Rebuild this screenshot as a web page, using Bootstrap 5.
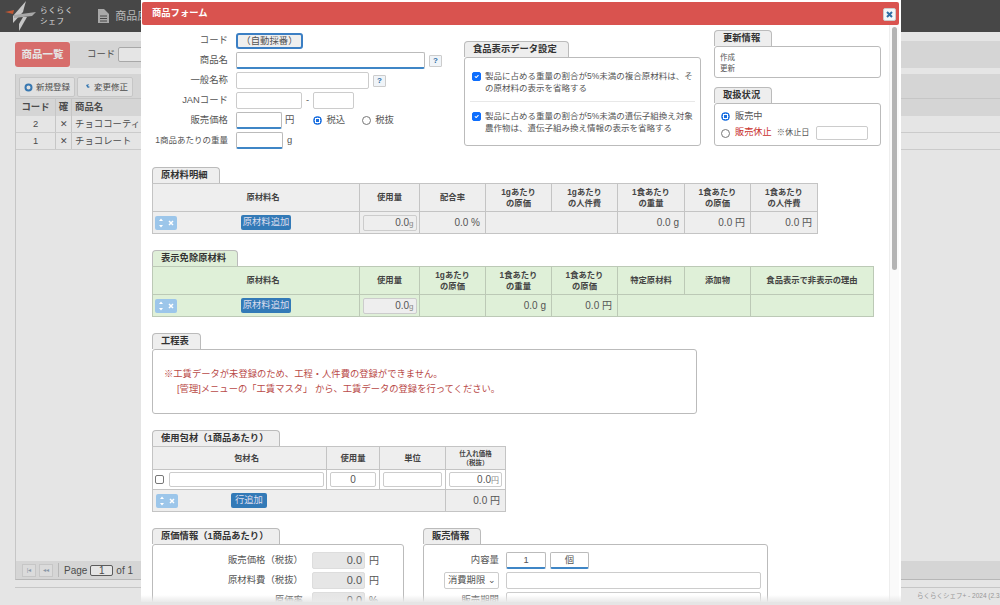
<!DOCTYPE html>
<html lang="ja">
<head>
<meta charset="utf-8">
<title>商品フォーム</title>
<link href="https://cdn.jsdelivr.net/npm/bootstrap@5.3.0/dist/css/bootstrap.min.css" rel="stylesheet">
<style>
html,body{height:100%;overflow:hidden}
body{font-family:"Liberation Sans","Noto Sans CJK JP",sans-serif;font-size:9.4px;color:#555;background:#fff;position:relative;width:1000px;height:605px}
/* background page */
.topbar{height:32px;background:#505050;color:#ccc}
.logo-mark{margin-left:4px}
.logo-txt{font-size:7.500px;line-height:11px;color:#f0f0f0;letter-spacing:.8px;margin-left:4px}
.menu-ico{margin-left:25px}
.menu-txt{font-size:11px;color:#ccc;margin-left:6px;width:26px;overflow:hidden;white-space:nowrap}
.bg-gap{height:9px}
.bg-head{height:27px;padding:0 0 0 15px;background:linear-gradient(90deg,#fff 70px,#eee 70px)}
.red-tab{width:55px;height:25px;background:#f07a78;color:#fff;font-weight:700;font-size:10.500px;border-radius:3px}
.bg-lab{margin-left:17px}
.bg-input{width:60px;height:15px;background:#fff;border:1px solid #bbb;border-radius:2px;margin-left:3px}
.panel{margin:6px 0 0 15px;height:506px;background:#fff;border-left:1px solid #ddd;border-bottom:1px solid #ccc;width:985px;position:relative}
.tool{height:25px;background:#eee;padding:3px 3px 2px;gap:2px;border-bottom:1px solid #ddd}
.tool-b{height:20px;width:56px;background:#fafafa;border:1px solid #ddd;border-radius:2px;font-size:8.500px;color:#555;gap:3px}
.bg-row{height:17px;border-bottom:1px solid #e2e2e2;line-height:16px}
.bg-row.hd{background:#eee;font-weight:700;border-bottom:0}
.c1{width:40px;text-align:center;border-right:1px solid #ddd}
.c2{width:16px;text-align:center;border-right:1px solid #ddd}
.c3{padding-left:3px;white-space:nowrap}
.pager{position:absolute;left:0;right:0;bottom:0;height:18px;background:#eee;padding-left:6px;gap:3px;font-size:10px}
.pg-b{width:14px;height:13px;background:#f4f4f4;border:1px solid #ddd;font-size:6px;color:#9ab;text-align:center;line-height:11px}
.pg-i{width:23px;height:11px;border:1px solid #666;border-radius:2px;background:#fff;text-align:center;line-height:9px}
.pg-sep{width:1px;height:14px;background:#ccc;margin:0 2px}
.bg-line{margin:7px 0 0 15px;border-top:1px solid #ddd}
.foot-t{position:absolute;left:917px;top:591px;font-size:6.500px;color:#aaa;white-space:nowrap;width:83px;overflow:hidden}
.dim{position:absolute;inset:0;background:rgba(0,0,0,.1)}
/* modal window */
.win{position:absolute;left:141px;top:0;width:760px;height:602px;background:#fff;overflow:hidden}
.win::after{content:"";position:absolute;left:0;right:0;bottom:0;height:7px;background:linear-gradient(rgba(235,235,235,0),#e9e9e9)}
.win-h{height:23px;margin:2px 2px 0 1px;background:#d9534f;color:#fff;font-weight:700;font-size:9.300px;padding:1px 3px 0 10px;border-radius:2px}
.win-x{width:13px;height:13px;background:#f4f6f8;border:1px solid #ccc;border-radius:2px}
.sb{position:absolute;right:2px;top:25px;width:10px;bottom:0;background:#fafafa;border-left:1px solid #eee}
.sb-t{position:absolute;left:2px;top:2px;width:5px;height:243px;background:#b4b4b4;border-radius:3px}
.win-b{padding-left:11px;width:740px}
.top-part{height:142px}
.form-col{width:312px;padding-top:7px}
.frow{height:17px;margin-bottom:3px}
.flab{width:76px;margin-right:8px;text-align:right;white-space:nowrap}
.lab-s{font-size:8.500px}
.ipt{height:17px;border:1px solid #ccc;border-radius:2px;background:#fff;display:block}
.ipt.req{border-color:#bbb;border-bottom:2px solid #3f86c6}
.w189{width:189px}.w133{width:133px}.w66{width:66px}.w41{width:41px}.w46{width:46px}.w47{width:47px}.w52{width:52px;height:14px;margin-left:1px}
.auto-b{width:67px;height:16px;background:#efefef;border:2px solid #3b7fc4;border-radius:3px;font-size:9.400px;line-height:12px;text-align:center}
.q{width:13px;height:12px;background:#f0f4f8;border:1px solid #ccc;border-radius:1px;color:#2e6da4;font-weight:700;font-size:8px;line-height:10px;text-align:center;margin-left:4px}
.tabt{display:block;width:fit-content;height:16px;line-height:15px;background:#eee;border:1px solid #bbb;border-bottom:0;border-radius:4px 4px 0 0;padding:0 11px 0 8px;font-weight:700;font-size:9.300px;color:#333;white-space:nowrap}
.tabt.grn{background:#dfefd8}
.sbox{border:1px solid #bbb;border-radius:3px;background:#fff}
.food{width:237px;padding-top:16px}
.food .sbox{height:89px;padding:0 5px}
.chk-r{padding:12px 0 7px 2px;line-height:12px;font-size:8.500px;gap:4px}
.chk-r+.chk-r{border-top:1px solid #e8e8e8;padding-top:8px;padding-bottom:0}
.form-check-input{border-color:#777}
.form-check-input.mini{width:9px;height:9px;margin:2px 0 0;flex:none;border-radius:2px}
.form-check-input.rd{width:9px;height:9px;margin:0;flex:none}
.form-check-input.rd:checked{background:radial-gradient(circle,#1a6fe0 0 34%,#fff 38% 58%,#1a6fe0 62%);border-color:#1a6fe0}
.form-check-input.pk{width:9px;height:9px;margin:0;flex:none;border-radius:2px}
.m19{margin-left:3px;margin-right:19px}.m17{margin-left:4px;margin-right:17px}
.rt{width:167px;margin-left:13px;padding-top:5px}
.upd{height:32px;padding:5px 5px;font-size:7.500px;line-height:11px}
.stat{height:43px;padding:6px 6px;font-size:9.200px;white-space:nowrap}
.sr1{height:13px;margin-bottom:3px;gap:5px}
.sr2{height:14px;gap:5px}
.sm8{font-size:8.200px}
.sp9{height:9px}
.red-t{color:#c9302c}
.tw{table-layout:fixed;border-collapse:collapse;margin:0}
.tw th,.tw td{border:1px solid #c4c4c4;padding:0;background:#eee;vertical-align:middle;font-size:10px;box-shadow:none;color:#555}
.tw th{text-align:center;font-weight:700;line-height:11px;font-size:8.300px;color:#444}
.tw th.th-s{font-size:6.500px;line-height:9px}
.tw th.th-n{padding-left:14px}
.tw.grn th,.tw.grn td{background:#dff0d8;border-color:#bcc9b6}
.tw td.r{text-align:right;padding-right:5px}
.tw td.wh{background:#fff}
.tw .hr1{height:28px}.tw .br1{height:22px}
.t665{width:665px}.t721{width:721px}.t353{width:353px}
.k207{width:207px}.k60{width:60px}.k66{width:66px}.k67{width:67px}.k123{width:123px}.k174{width:174px}.k53{width:53px}
.ctrl{width:22px;height:14px;background:#9cc6ea;border-radius:2px;margin-left:2px;flex:none}
.ctrl-p{margin-left:3px}
.add-b{background:#337ab7;color:#dde;border:0;border-radius:2px;font-size:9.300px;height:15px;line-height:15px;padding:0 2px;font-weight:400}
.add-m{margin:0 auto;position:relative;left:-2px}
.add-line{margin-left:53px;padding:0 4px}
.use-b{height:16px;width:54px;margin:0 auto;background:#eee;border:1px solid #ccc;border-radius:2px;padding:0 2px;text-align:right;font-size:10px;line-height:14px;color:#555}
.use-b small{font-size:8px;color:#888}
.kou{width:545px;height:65px;padding:17px 0 0 11px;line-height:15px;color:#b94a48;font-size:9.300px}
.kou p{margin:0}.kou p+p{padding-left:13px}
.kh1{height:23px}.kh2{height:20px}.kh3{height:22px}
.cin{height:15px;background:#fff;border:1px solid #ccc;border-radius:2px;margin:0 auto;width:calc(100% - 6px);text-align:center;line-height:13px}
.cin.rr{text-align:right;padding-right:2px}
.cin small{font-size:8px;color:#888}
.cin.ff{flex:1 1 auto;width:auto;margin:0}
.pk-w{padding:0 2px;gap:5px}
.gen{width:252px;height:80px;padding:7px 0 0}
.han{width:345px;height:80px;padding:7px 0 0}
.gap16{height:16px}
.wrap-h{margin-left:19px}
.grow{height:17px;margin-bottom:3px}
.glab{width:150px;text-align:right;margin-right:9px}
.ro{width:53px;height:17px;background:#e6e6e6;border:1px solid #ddd;border-radius:2px;text-align:right;padding-right:2px;font-size:11px;line-height:15px}
.un{margin-left:4px;font-size:10px}
.hlab{width:75px;text-align:right;margin-right:7px}
.sel{width:55px;height:17px;margin-left:20px;margin-right:7px;border:1px solid #ccc;border-radius:2px;padding:0 3px;background:#fff;white-space:nowrap;font-size:9.300px;line-height:15px}
.i255{width:255px}.i40{width:40px;text-align:center;line-height:14px}.i39{width:39px;margin-left:4px;text-align:center;line-height:14px}
</style>
</head>
<body>
<div class="topbar d-flex align-items-center">
  <svg class="logo-mark" width="32" height="32" viewBox="0 0 32 32"><path d="M22 1 9 16v7L19 12l1-4z" fill="#ddd"/><path d="M10 15 32 12l-4 4-18 2z" fill="#bbb"/><path d="M23 17 15 31v-7l4-7z" fill="#ddd"/><path d="M1 12l9-2-1 4z" fill="#d8623a"/></svg>
  <div class="logo-txt">らくらく<br>シェフ</div>
  <svg class="menu-ico" width="11" height="14" viewBox="0 0 11 14"><path d="M0 0h6l5 5v9H0z" fill="#bbb"/><path d="M2 7h7M2 9.500h7M2 12h7" stroke="#505050"/></svg>
  <div class="menu-txt">商品原材料</div>
</div>
<div class="bg-gap"></div>
<div class="bg-head d-flex align-items-center">
  <div class="red-tab d-flex align-items-center justify-content-center">商品一覧</div>
  <div class="bg-lab">コード</div><div class="bg-input"></div>
</div>
<div class="panel">
  <div class="tool d-flex">
    <div class="tool-b d-flex align-items-center justify-content-center"><svg width="9" height="9" viewBox="0 0 9 9"><circle cx="4.500" cy="4.500" r="3" fill="none" stroke="#3f86c6" stroke-width="2"/></svg>新規登録</div>
    <div class="tool-b d-flex align-items-center justify-content-center"><svg width="9" height="9" viewBox="0 0 9 9"><path d="M1 8 5 4l-1-2 3-1-1 2 2 1-2 1-1-1-4 4z" fill="#3f86c6"/></svg>変更修正</div>
  </div>
  <div class="bg-row hd d-flex"><div class="c1">コード</div><div class="c2">確</div><div class="c3">商品名</div></div>
  <div class="bg-row d-flex"><div class="c1">2</div><div class="c2">✕</div><div class="c3">チョココーティング</div></div>
  <div class="bg-row d-flex"><div class="c1">1</div><div class="c2">✕</div><div class="c3">チョコレート</div></div>
  <div class="pager d-flex align-items-center">
    <div class="pg-b">|◂</div><div class="pg-b">◂◂</div><div class="pg-sep"></div><div>Page</div><div class="pg-i">1</div><div>of 1</div>
  </div>
</div>
<div class="bg-line"></div>
<div class="foot-t">らくらくシェフ+ - 2024 (2.3.8)</div>
<div class="dim"></div>

<div class="win">
  <div class="win-h d-flex align-items-center justify-content-between">
    <span>商品フォーム</span>
    <span class="win-x d-flex align-items-center justify-content-center"><svg width="7" height="7" viewBox="0 0 7 7"><path d="M1 1l5 5M6 1 1 6" stroke="#2e6da4" stroke-width="2"/></svg></span>
  </div>
  <div class="sb"><div class="sb-t"></div></div>
  <div class="win-b">
    <div class="top-part d-flex">
      <div class="form-col">
        <div class="frow d-flex align-items-center"><div class="flab">コード</div><div class="auto-b">（自動採番）</div></div>
        <div class="frow d-flex align-items-center"><div class="flab">商品名</div><div class="ipt req w189"></div><div class="q">?</div></div>
        <div class="frow d-flex align-items-center"><div class="flab">一般名称</div><div class="ipt w133"></div><div class="q">?</div></div>
        <div class="frow d-flex align-items-center"><div class="flab">JANコード</div><div class="ipt w66"></div><div class="mx-1">-</div><div class="ipt w41"></div></div>
        <div class="frow d-flex align-items-center"><div class="flab">販売価格</div><div class="ipt req w46"></div><div class="m19">円</div><input class="form-check-input rd" type="radio" name="tax" checked aria-label="税込"><div class="m17">税込</div><input class="form-check-input rd" type="radio" name="tax" aria-label="税抜"><div class="ms-1">税抜</div></div>
        <div class="frow d-flex align-items-center"><div class="flab lab-s">1商品あたりの重量</div><div class="ipt req w47"></div><div class="ms-1">g</div></div>
      </div>
      <div class="food">
        <span class="tabt">食品表示データ設定</span>
        <div class="sbox">
          <div class="chk-r d-flex"><input class="form-check-input mini" type="checkbox" checked aria-label="複合原材料"><div>製品に占める重量の割合が5%未満の複合原材料は、その原材料の表示を省略する</div></div>
          <div class="chk-r d-flex"><input class="form-check-input mini" type="checkbox" checked aria-label="遺伝子組換え"><div>製品に占める重量の割合が5%未満の遺伝子組換え対象農作物は、遺伝子組み換え情報の表示を省略する</div></div>
        </div>
      </div>
      <div class="rt">
        <span class="tabt">更新情報</span>
        <div class="sbox upd">作成<br>更新</div>
        <div class="sp9"></div>
        <span class="tabt">取扱状況</span>
        <div class="sbox stat">
          <div class="d-flex align-items-center sr1"><input class="form-check-input rd" type="radio" name="st" checked aria-label="販売中"><span>販売中</span></div>
          <div class="d-flex align-items-center sr2"><input class="form-check-input rd" type="radio" name="st" aria-label="販売休止"><span class="red-t">販売休止</span><span class="sm8">※休止日</span><div class="ipt w52"></div></div>
        </div>
      </div>
    </div>

    <span class="tabt">原材料明細</span>
    <table class="tw t665">
      <colgroup><col class="k207"><col class="k60"><col class="k66"><col class="k66"><col class="k66"><col class="k67"><col class="k66"><col class="k67"></colgroup>
      <tr class="hr1"><th class="th-n">原材料名</th><th>使用量</th><th>配合率</th><th>1gあたり<br>の原価</th><th>1gあたり<br>の人件費</th><th>1食あたり<br>の重量</th><th>1食あたり<br>の原価</th><th>1食あたり<br>の人件費</th></tr>
      <tr class="br1"><td><div class="d-flex align-items-center"><div class="ctrl d-flex align-items-center justify-content-center"><svg width="20" height="12" viewBox="0 0 20 12"><path d="M3 4l2-2.500L7 4zM3 8l2 2.500L7 8z" fill="#fff"/><path d="M13 4l4 4M17 4l-4 4" stroke="#fff" stroke-width="1.500"/></svg></div><button type="button" class="add-b add-m">原材料追加</button></div></td><td><div class="use-b">0.0<small>g</small></div></td><td class="r">0.0 %</td><td colspan="2"></td><td class="r">0.0 g</td><td class="r">0.0 円</td><td class="r">0.0 円</td></tr>
    </table>
    <div class="gap16"></div>
    <span class="tabt grn">表示免除原材料</span>
    <table class="tw grn t721">
      <colgroup><col class="k207"><col class="k60"><col class="k66"><col class="k66"><col class="k66"><col class="k67"><col class="k66"><col class="k123"></colgroup>
      <tr class="hr1"><th class="th-n">原材料名</th><th>使用量</th><th>1gあたり<br>の原価</th><th>1食あたり<br>の重量</th><th>1食あたり<br>の原価</th><th>特定原材料</th><th>添加物</th><th>食品表示で非表示の理由</th></tr>
      <tr class="br1"><td><div class="d-flex align-items-center"><div class="ctrl d-flex align-items-center justify-content-center"><svg width="20" height="12" viewBox="0 0 20 12"><path d="M3 4l2-2.500L7 4zM3 8l2 2.500L7 8z" fill="#fff"/><path d="M13 4l4 4M17 4l-4 4" stroke="#fff" stroke-width="1.500"/></svg></div><button type="button" class="add-b add-m">原材料追加</button></div></td><td><div class="use-b">0.0<small>g</small></div></td><td></td><td class="r">0.0 g</td><td class="r">0.0 円</td><td colspan="2"></td><td></td></tr>
    </table>
    <div class="gap16"></div>
    <span class="tabt">工程表</span>
    <div class="sbox kou">
      <p>※工賃データが未登録のため、工程・人件費の登録ができません。</p>
      <p>[管理]メニューの「工賃マスタ」 から、工賃データの登録を行ってください。</p>
    </div>
    <div class="gap16"></div>
    <span class="tabt">使用包材（1商品あたり）</span>
    <table class="tw t353">
      <colgroup><col class="k174"><col class="k53"><col class="k66"><col class="k60"></colgroup>
      <tr class="kh1"><th class="th-n">包材名</th><th>使用量</th><th>単位</th><th class="th-s">仕入れ価格<br>（税抜）</th></tr>
      <tr class="kh2"><td class="wh"><div class="d-flex align-items-center pk-w"><input class="form-check-input pk" type="checkbox" aria-label="選択"><div class="cin ff"></div></div></td><td class="wh"><div class="cin">0</div></td><td class="wh"><div class="cin"></div></td><td class="wh"><div class="cin rr">0.0<small>円</small></div></td></tr>
      <tr class="kh3"><td colspan="3"><div class="d-flex align-items-center"><div class="ctrl ctrl-p d-flex align-items-center justify-content-center"><svg width="20" height="12" viewBox="0 0 20 12"><path d="M3 4l2-2.500L7 4zM3 8l2 2.500L7 8z" fill="#fff"/><path d="M13 4l4 4M17 4l-4 4" stroke="#fff" stroke-width="1.500"/></svg></div><button type="button" class="add-b add-line">行追加</button></div></td><td class="r">0.0 円</td></tr>
    </table>
    <div class="gap16"></div>
    <div class="d-flex">
      <div>
        <span class="tabt">原価情報（1商品あたり）</span>
        <div class="sbox gen">
          <div class="grow d-flex align-items-center"><div class="glab">販売価格（税抜）</div><div class="ro">0.0</div><div class="un">円</div></div>
          <div class="grow d-flex align-items-center"><div class="glab">原材料費（税抜）</div><div class="ro">0.0</div><div class="un">円</div></div>
          <div class="grow d-flex align-items-center"><div class="glab">原価率</div><div class="ro">0.0</div><div class="un">%</div></div>
        </div>
      </div>
      <div class="wrap-h">
        <span class="tabt">販売情報</span>
        <div class="sbox han">
          <div class="grow d-flex align-items-center"><div class="hlab">内容量</div><div class="ipt req i40">1</div><div class="ipt req i39">個</div></div>
          <div class="grow d-flex align-items-center"><div class="sel">消費期限 ⌄</div><div class="ipt i255"></div></div>
          <div class="grow d-flex align-items-center"><div class="hlab">販売期間</div><div class="ipt i255"></div></div>
        </div>
      </div>
    </div>
  </div>
</div>
<script src="https://cdn.jsdelivr.net/npm/bootstrap@5.3.0/dist/js/bootstrap.bundle.min.js"></script>
</body>
</html>
